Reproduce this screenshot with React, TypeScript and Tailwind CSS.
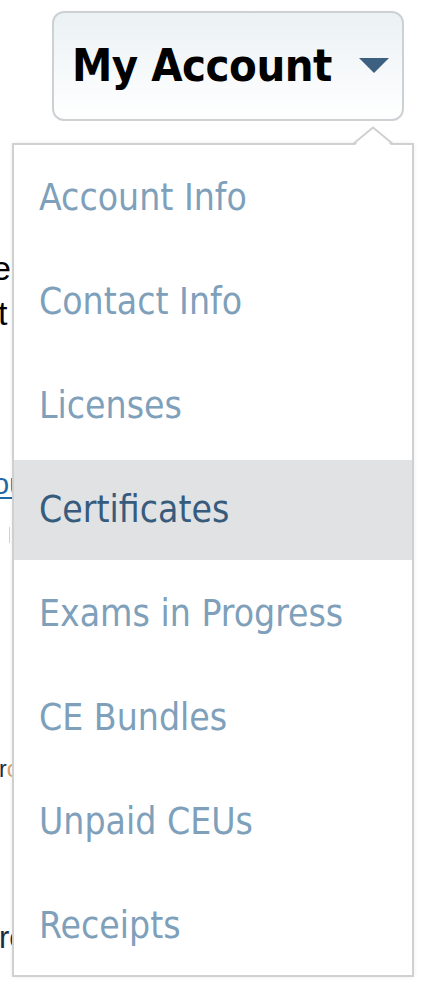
const menuItems = [
  'Account Info',
  'Contact Info',
  'Licenses',
  'Certificates',
  'Exams in Progress',
  'CE Bundles',
  'Unpaid CEUs',
  'Receipts',
]

const ACTIVE = 'Certificates'

function Caret() {
  return (
    <svg width="30" height="16" viewBox="0 0 30 16" className="shrink-0">
      <polygon points="0,0 30,0 15,15" fill="#3d5f80" />
    </svg>
  )
}

export default function App() {
  return (
    <div className="relative w-[424px] h-[986px] overflow-hidden bg-white font-['Liberation_Sans',Arial,sans-serif]">
      {/* header with account button */}
      <div className="pt-[11px] pl-[52px]">
        <button className="flex items-center justify-between w-[352px] h-[110px] pl-[18px] pr-[13px] rounded-[12px] border-2 border-[#cdd1d4] bg-gradient-to-b from-[#ebf1f4] to-white">
          <span className="text-[45px] font-bold text-black tracking-[-0.5px] font-['DejaVu_Sans_Condensed','DejaVu_Sans',sans-serif]">
            My Account
          </span>
          <Caret />
        </button>
      </div>

      {/* page content mostly hidden behind the menu */}
      <div className="flex flex-col text-black">
        <div className="mt-[130px] -ml-[8px] h-[34px] text-[34px] leading-none whitespace-nowrap">e</div>
        <div className="mt-[11px] -ml-[2px] h-[34px] text-[34px] leading-none whitespace-nowrap">t</div>
        <div className="mt-[140px] -ml-[7px] h-[29px] text-[29px] leading-none whitespace-nowrap text-[#1f6aa5] underline underline-offset-[3px]">
          ou
        </div>
        <div className="mt-[28px] ml-[9px] w-px h-[16px] bg-[#f2cf98]" />
        <div className="mt-[215px] -ml-[1px] h-[23px] text-[23px] leading-none whitespace-nowrap text-[#1c2c44]">
          r<span className="text-[#d9a062]">o</span>
        </div>
        <div className="mt-[141px] -ml-[1px] h-[31px] text-[31px] leading-none whitespace-nowrap text-[#1c2c44]">rc</div>
      </div>

      {/* dropdown menu */}
      <div className="absolute left-[12px] top-[143px] w-[402px] h-[834px] border-2 border-[#d0d0d0] bg-white shadow-[0_0_4px_rgba(0,0,0,0.08)]">
        <ul className="flex flex-col gap-[4px] pt-[3px]">
          {menuItems.map((item) => (
            <li
              key={item}
              className={
                item === ACTIVE
                  ? 'flex items-center h-[100px] pl-[25px] bg-[#e1e2e4] text-[#375b7c]'
                  : 'flex items-center h-[100px] pl-[25px] text-[#7ea0ba]'
              }
            >
              <span className="text-[37px] font-['DejaVu_Sans_Condensed','DejaVu_Sans',sans-serif]">{item}</span>
            </li>
          ))}
        </ul>
      </div>

      {/* pointer notch */}
      <svg width="40" height="20" viewBox="0 0 40 20" className="absolute left-[353px] top-[126px]">
        <polygon points="1,20 20,2 39,20" fill="#ffffff" />
        <polyline points="0,18 20,1.5 40,18" fill="none" stroke="#d0d0d0" strokeWidth="2" />
      </svg>
    </div>
  )
}
